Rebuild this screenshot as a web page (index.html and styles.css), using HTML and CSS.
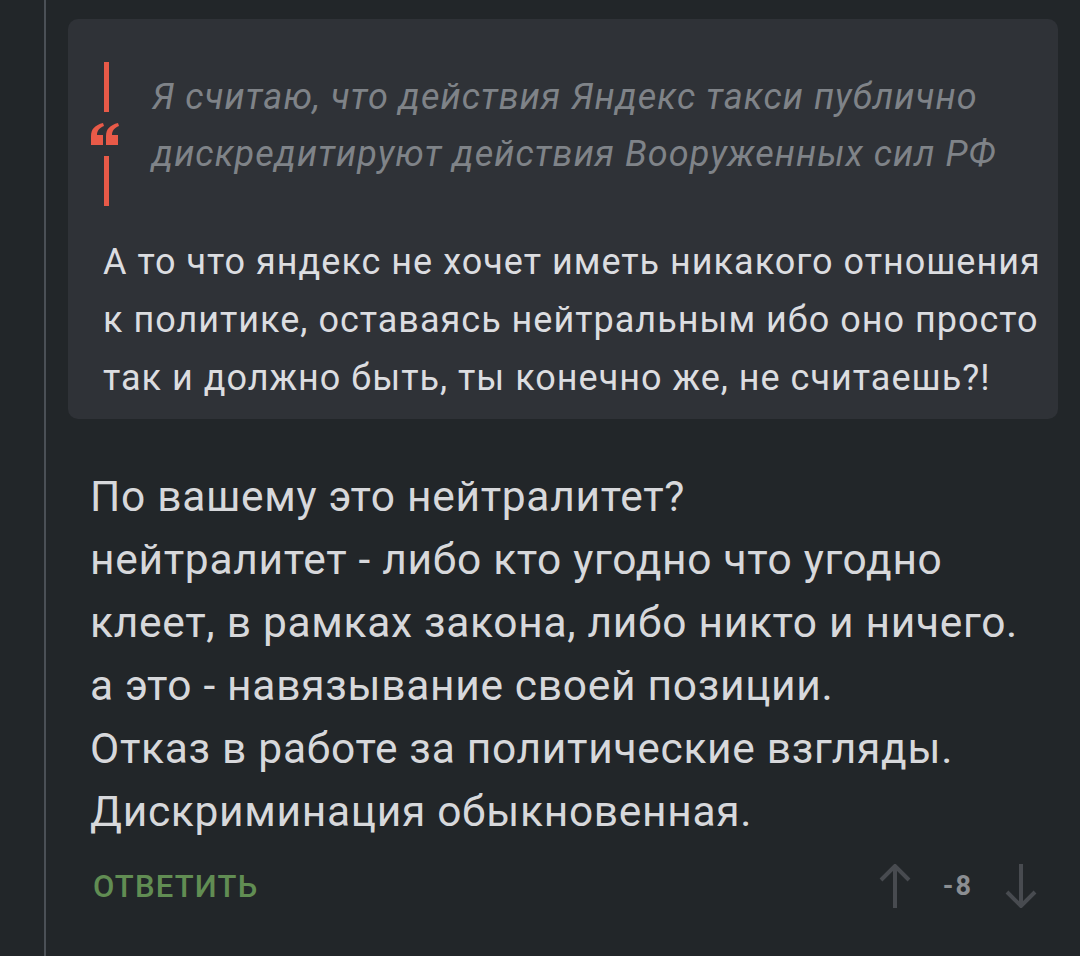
FILE: index.html
```html
<!DOCTYPE html>
<html lang="ru">
<head>
<meta charset="utf-8">
<link rel="stylesheet" href="styles.css">
</head>
<body>
<div class="thread">
  <div class="comment">
    <div class="box">
      <div class="quote">
        <div class="quote-deco">
          <span class="bar"></span>
          <svg class="mark" width="30" height="22" viewBox="0 0 30 22"><path d="M1 22V13C1 6 5 2 13 0L14 3C9 5 7 8 7 12H13V22Z M16 22V13C16 6 20 2 28 0L29 3C24 5 22 8 22 12H28V22Z" fill="#e85a48"/></svg>
          <span class="bar"></span>
        </div>
        <p class="quote-text">Я считаю, что действия Яндекс такси публично дискредитируют действия Вооруженных сил РФ</p>
      </div>
      <p class="box-text">А то что яндекс не хочет иметь никакого отношения к политике, оставаясь нейтральным ибо оно просто так и должно быть, ты конечно же, не считаешь?!</p>
    </div>
    <p class="body-text">По вашему это нейтралитет?<br>нейтралитет - либо кто угодно что угодно клеет, в рамках закона, либо никто и ничего.<br>а это - навязывание своей позиции.<br>Отказ в работе за политические взгляды.<br>Дискриминация обыкновенная.</p>
    <div class="footer">
      <span class="reply">ОТВЕТИТЬ</span>
      <div class="votes">
        <svg class="arrow" width="32" height="44" viewBox="0 0 32 44"><path d="M16 3V44M2 16L16 2L30 16" fill="none" stroke="#484b50" stroke-width="4"/></svg>
        <span class="score">-8</span>
        <svg class="arrow" width="32" height="44" viewBox="0 0 32 44"><path d="M16 0V41M2 28L16 42L30 28" fill="none" stroke="#484b50" stroke-width="4"/></svg>
      </div>
    </div>
  </div>
</div>
</body>
</html>
```
FILE: styles.css
```css
* { box-sizing: border-box; }
html, body { margin: 0; padding: 0; }
body {
  background: #222629;
  font-family: Roboto, "Noto Sans", sans-serif;
  width: 1080px;
  height: 956px;
  overflow: hidden;
}
.thread {
  margin-left: 44px;
  border-left: 2px solid #4b5056;
  padding: 19px 22px 0 22px;
  height: 956px;
}
.box {
  background: #2f3237;
  border-radius: 10px;
  padding: 43px 8px 12px 35px;
}
.quote {
  display: flex;
  align-items: flex-start;
}
.quote-deco {
  width: 49px;
  display: flex;
  flex-direction: column;
  align-items: flex-start;
  flex-shrink: 0;
}
.bar {
  display: block;
  width: 5px;
  height: 50px;
  background: #e85a48;
  margin-left: 1px;
}
.mark {
  display: block;
  margin: 11px 0 11px -13px;
}
.quote-text {
  margin: 7px 0 0 0;
  color: #7f8388;
  font-style: italic;
  font-size: 36px;
  letter-spacing: 1.05px;
  line-height: 57px;
}
.box-text {
  margin: 27px 0 0 0;
  color: #dcdde0;
  font-size: 36px;
  letter-spacing: 1px;
  line-height: 58px;
}
.body-text {
  margin: 46px 0 0 22px;
  color: #d7d8db;
  font-size: 42.5px;
  letter-spacing: 0.7px;
  line-height: 63px;
}
.footer {
  display: flex;
  justify-content: space-between;
  align-items: center;
  height: 44px;
  margin-top: 21px;
  padding: 0 21px 0 25px;
}
.reply {
  color: #618d53;
  font-size: 31px;
  letter-spacing: 1.2px;
  font-weight: 500;
}
.votes {
  display: flex;
  align-items: center;
  gap: 32px;
}
.score {
  color: #8b8e92;
  font-weight: bold;
  font-size: 27px;
  letter-spacing: 2px;
}
```
